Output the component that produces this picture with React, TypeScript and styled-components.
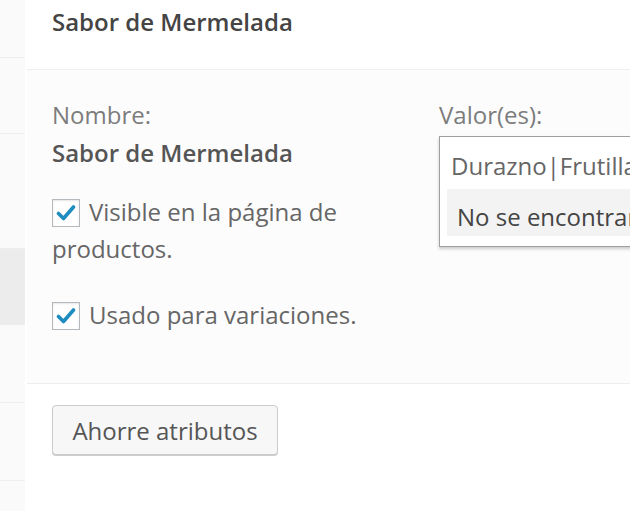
import React from "react";
import styled, { createGlobalStyle } from "styled-components";

const GlobalStyle = createGlobalStyle`
  html, body {
    margin: 0;
    padding: 0;
    background: #fff;
    overflow: hidden;
  }
  body {
    font-family: "Open Sans", "DejaVu Sans", sans-serif;
    font-size: 24px;
  }
`;

const Page = styled.div`
  display: flex;
  width: 630px;
  height: 511px;
  background: #fff;
  overflow: hidden;
`;

const Sidebar = styled.ul`
  width: 25px;
  margin: 0 2px 0 0;
  padding: 0;
  list-style: none;
  background: #fafafa;
  display: flex;
  flex-direction: column;
`;

const Tab = styled.li<{ $h: number; $active?: boolean }>`
  height: ${(p) => p.$h}px;
  flex-shrink: 0;
  border-bottom: 1px solid #eee;
  background: ${(p) => (p.$active ? "#ececec" : "transparent")};
`;

const Main = styled.div`
  flex: 1;
  display: flex;
  flex-direction: column;
  min-width: 0;
`;

const Header = styled.h3`
  margin: 0;
  height: 70px;
  box-sizing: border-box;
  padding: 5px 0 0 25px;
  font-size: 24px;
  line-height: 33.6px;
  font-weight: 600;
  color: #444;
  background: #fff;
  border-bottom: 1px solid #eee;
`;

const Body = styled.div`
  height: 314px;
  box-sizing: border-box;
  display: flex;
  padding: 26px 0 0 25px;
  background: #fcfcfc;
  border-bottom: 1px solid #eee;
`;

const LeftCol = styled.div`
  width: 387px;
  flex-shrink: 0;
`;

const RightCol = styled.div`
  flex: 1;
  min-width: 0;
`;

const FieldLabel = styled.div`
  line-height: 38px;
  color: #7c7c7c;
`;

const FieldValue = styled.div`
  line-height: 38px;
  font-weight: 600;
  color: #555;
`;

const CheckRow = styled.label<{ $top: number }>`
  display: block;
  margin-top: ${(p) => p.$top}px;
  line-height: 37px;
  color: #666;
  width: 320px;
`;

const Box = styled.span`
  display: inline-block;
  width: 28px;
  height: 28px;
  box-sizing: border-box;
  margin-right: 9px;
  vertical-align: -6px;
  border: 1px solid #b4b9be;
  background: #fff;
  box-shadow: inset 0 1px 2px rgba(0, 0, 0, 0.1);
  position: relative;
  svg {
    position: absolute;
    left: 3px;
    top: 4px;
  }
`;

const ValuesBox = styled.div`
  margin-top: 2px;
  width: 300px;
  height: 111px;
  box-sizing: border-box;
  border: 1px solid #a0a0a0;
  background: #fff;
  box-shadow: 0 2px 3px rgba(0, 0, 0, 0.2);
  padding: 0 0 0 7px;
  overflow: hidden;
`;

const ValuesText = styled.div`
  height: 52px;
  box-sizing: border-box;
  padding: 3px 0 0 4px;
  line-height: 52px;
  color: #666;
  white-space: nowrap;
`;

const NoResults = styled.div`
  height: 47px;
  line-height: 56px;
  padding-left: 10px;
  background: #f3f3f3;
  color: #444;
  white-space: nowrap;
  overflow: hidden;
`;

const Footer = styled.div`
  padding: 21px 0 0 25px;
  background: #fff;
  flex: 1;
`;

const Button = styled.button`
  width: 226px;
  height: 50px;
  box-sizing: border-box;
  padding: 0;
  border: 1px solid #ccc;
  border-radius: 4px;
  background: #f7f7f7;
  box-shadow: 0 1px 0 #ccc;
  font-family: "Open Sans", "DejaVu Sans", sans-serif;
  font-size: 24px;
  color: #555;
`;

const Check = () => (
  <svg width="20" height="18" viewBox="0 0 20 18">
    <path
      d="M2.5 9.5 L7.5 14.5 L17.5 3"
      fill="none"
      stroke="#1e8cbe"
      strokeWidth="3.6"
      strokeLinecap="round"
      strokeLinejoin="round"
    />
  </svg>
);

const tabs = [
  { h: 57 },
  { h: 75 },
  { h: 114 },
  { h: 75, active: true },
  { h: 77 },
  { h: 77 },
];

export default function App() {
  return (
    <Page>
      <GlobalStyle />
      <Sidebar>
        {tabs.map((t, i) => (
          <Tab key={i} $h={t.h} $active={t.active} />
        ))}
      </Sidebar>
      <Main>
        <Header>Sabor de Mermelada</Header>
        <Body>
          <LeftCol>
            <FieldLabel>Nombre:</FieldLabel>
            <FieldValue>Sabor de Mermelada</FieldValue>
            <CheckRow $top={21}>
              <Box>
                <Check />
              </Box>
              Visible en la página de productos.
            </CheckRow>
            <CheckRow $top={29}>
              <Box>
                <Check />
              </Box>
              Usado para variaciones.
            </CheckRow>
          </LeftCol>
          <RightCol>
            <FieldLabel>Valor(es):</FieldLabel>
            <ValuesBox>
              <ValuesText>Durazno|Frutilla</ValuesText>
              <NoResults>No se encontraron</NoResults>
            </ValuesBox>
          </RightCol>
        </Body>
        <Footer>
          <Button>Ahorre atributos</Button>
        </Footer>
      </Main>
    </Page>
  );
}
